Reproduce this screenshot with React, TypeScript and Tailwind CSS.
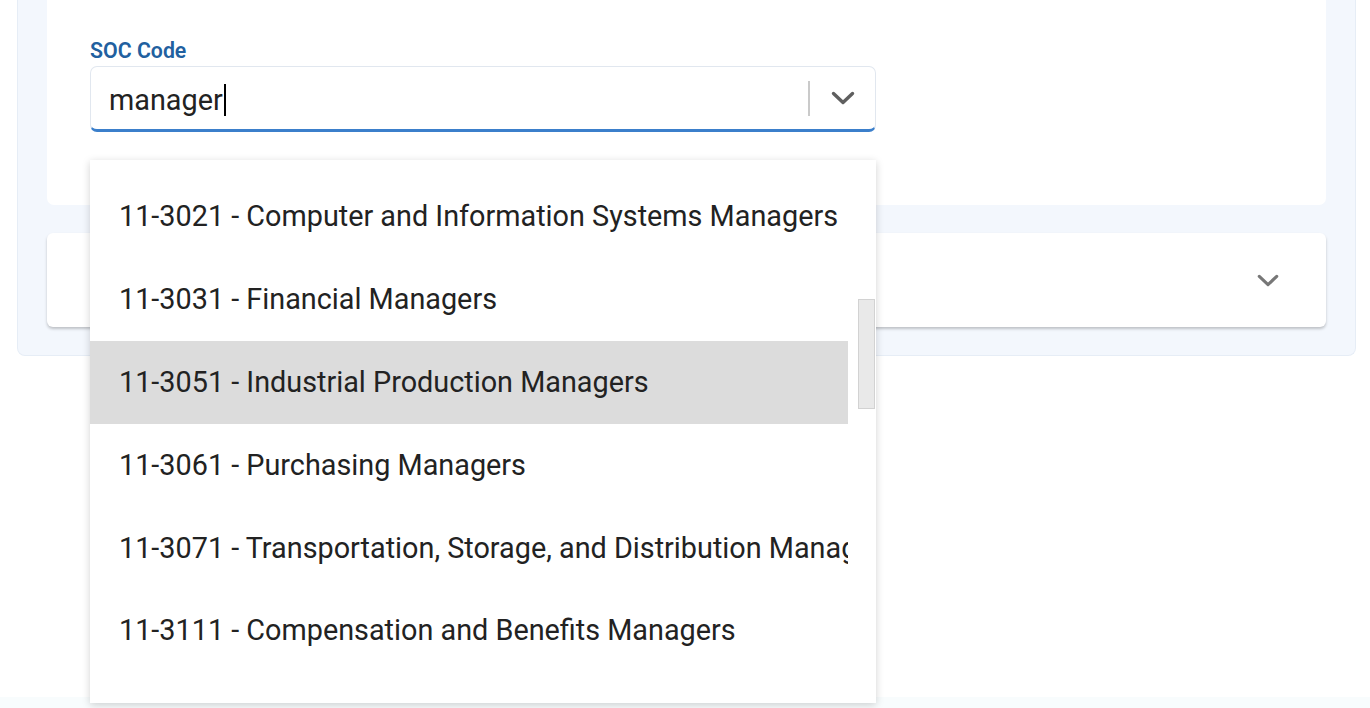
const options = [
  '11-3021 - Computer and Information Systems Managers',
  '11-3031 - Financial Managers',
  '11-3051 - Industrial Production Managers',
  '11-3061 - Purchasing Managers',
  '11-3071 - Transportation, Storage, and Distribution Managers',
  '11-3111 - Compensation and Benefits Managers',
];

function Chevron({ className, stroke }: { className: string; stroke: string }) {
  return (
    <svg className={className} viewBox="0 0 24 14" fill="none">
      <path d="M2.5 2.5 L12 11.5 L21.5 2.5" stroke={stroke} strokeWidth="3.4" strokeLinecap="round" strokeLinejoin="round" />
    </svg>
  );
}

export default function App() {
  const highlighted = 2;

  return (
    <div className="relative flex h-[708px] w-[1370px] flex-col overflow-hidden bg-white font-['Roboto',sans-serif]">
      <div className="ml-[17px] w-[1339px] rounded-b-[8px] border border-t-0 border-[#e6edf6] bg-[#f3f7fd] px-[29px] pb-[28px]">
        <div className="h-[205px] rounded-b-[7px] bg-white pl-[43px] pt-[38px]">
          <div className="text-[21.3px] font-semibold leading-[26px] text-[#21609f]">SOC Code</div>
          <div className="mt-[2px] flex h-[66px] w-[786px] items-center rounded-[7px] border border-b-[3px] border-[#e1e7ef] border-b-[#3b7fcb] pl-[18px]">
            <div className="flex items-center pt-[3px] text-[28.8px] leading-[34px] text-[#222]">
              manager
              <span className="ml-[1px] inline-block h-[32px] w-[2px] bg-black" />
            </div>
            <div className="flex-1" />
            <div className="h-[35px] w-[2px] bg-[#cacaca]" />
            <div className="flex w-[65px] items-center justify-center">
              <Chevron className="h-[14px] w-[24px]" stroke="#5f5f5f" />
            </div>
          </div>
        </div>

        <div className="mt-[28px] flex h-[94px] items-center justify-end rounded-[6px] bg-white pr-[47px] shadow-[0_2px_3px_rgba(0,0,0,0.22)]">
          <Chevron className="h-[13px] w-[22px]" stroke="#777777" />
        </div>
      </div>

      <div className="flex-1" />
      <div className="h-[11px] bg-[#f8fcfd]" />

      {/* open listbox */}
      <div className="absolute left-[90px] top-[160px] flex h-[543px] w-[786px] bg-white shadow-[0_2px_8px_rgba(0,0,0,0.18)]">
        <div className="w-[758px] overflow-hidden pt-[15.6px]">
          {options.map((opt, i) => (
            <div
              key={opt}
              className={
                i === highlighted
                  ? 'flex h-[82.8px] items-center whitespace-nowrap bg-[#dcdcdc] pl-[29px] text-[28.8px] text-[#222]'
                  : 'flex h-[82.8px] items-center whitespace-nowrap pl-[29px] text-[28.8px] text-[#222]'
              }
            >
              {opt}
            </div>
          ))}
        </div>
        <div className="ml-[10px] w-[17px] pt-[139px]">
          <div className="h-[110px] border border-[#d2d2d2] bg-[#e9e9e9]" />
        </div>
      </div>
    </div>
  );
}
